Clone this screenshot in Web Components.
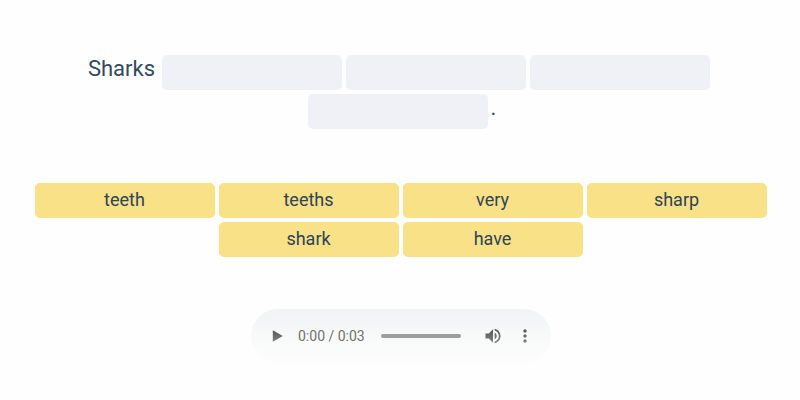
<!DOCTYPE html>
<html lang="en">
<head>
<meta charset="utf-8">
<meta name="viewport" content="width=device-width, initial-scale=1">
<title>Word order exercise</title>
<style>
  body { margin: 0; background: #fefefe; font-family: Roboto, "Liberation Sans", sans-serif; color: #34495e; }
</style>
</head>
<body>
<word-exercise>
  <sentence-line slot="sentence">
    <sentence-text>Sharks</sentence-text>
    <drop-slot></drop-slot>
    <drop-slot></drop-slot>
    <drop-slot></drop-slot>
    <drop-slot></drop-slot>
    <sentence-text tight>.</sentence-text>
  </sentence-line>
  <word-bank slot="bank">
    <word-tile>teeth</word-tile>
    <word-tile>teeths</word-tile>
    <word-tile>very</word-tile>
    <word-tile>sharp</word-tile>
    <word-tile>shark</word-tile>
    <word-tile>have</word-tile>
  </word-bank>
  <audio-bar slot="audio" current="0:00" total="0:03"></audio-bar>
</word-exercise>
<script>
  const define = (name, html, setup) => {
    const template = document.createElement('template');
    template.innerHTML = html;
    customElements.define(name, class extends HTMLElement {
      constructor() {
        super();
        this.attachShadow({ mode: 'open' }).append(template.content.cloneNode(true));
      }
      connectedCallback() { if (setup) setup(this, this.shadowRoot); }
    });
  };

  define('word-exercise', `
    <style>
      :host { display: block; padding: 55px 30px 36px 32px; }
      main { display: flex; flex-direction: column; }
      .bank { margin-top: 54px; }
      .audio { margin-top: 52px; display: flex; justify-content: center; }
    </style>
    <main>
      <slot name="sentence"></slot>
      <div class="bank"><slot name="bank"></slot></div>
      <div class="audio"><slot name="audio"></slot></div>
    </main>`);

  define('sentence-line', `
    <style>
      :host { display: flex; flex-wrap: wrap; justify-content: center; align-items: flex-start; gap: 4px; padding: 0 34px 0 30px; }
    </style>
    <slot></slot>`);

  define('sentence-text', `
    <style>
      :host { display: block; font-size: 22px; line-height: 27px; padding: 0 3px 0 0; }
      :host([tight]) { padding: 0; margin: 0 -6px 0 -1px; }
    </style>
    <slot></slot>`);

  define('drop-slot', `
    <style>
      :host { display: block; width: 180px; height: 35px; border-radius: 5px; background: #f0f1f6; }
    </style>`);

  define('word-bank', `
    <style>
      :host { display: flex; flex-wrap: wrap; justify-content: center; gap: 4px; }
    </style>
    <slot></slot>`);

  define('word-tile', `
    <style>
      :host { display: block; }
      button {
        display: block; width: 180px; height: 35px; margin: 0; padding: 0 1px 1px 0; border: 0; border-radius: 5px;
        background: #f9e187; color: #2f4356; font: 18px/34px Roboto, "Liberation Sans", sans-serif; text-align: center; cursor: grab;
      }
    </style>
    <button type="button"><slot></slot></button>`);

  define('audio-bar', `
    <style>
      :host { display: block; width: 300px; max-width: 100%; }
      .bar {
        box-sizing: border-box; height: 54px; padding: 0 10px; border-radius: 27px;
        background: linear-gradient(#f1f3f4, #f8f9f9 50%, #fdfdfd);
        display: flex; align-items: center; font-size: 14px; color: #717171;
      }
      button { width: 32px; height: 32px; border: 0; padding: 0; background: none; display: grid; place-items: center; flex: none; }
      svg { width: 20px; height: 20px; fill: url(#fade); display: block; }
      .time { margin-left: 5px; white-space: nowrap; }
      input {
        appearance: none; flex: 1; min-width: 0; height: 4px; margin: 0 16px;
        border-radius: 2px; background: #9c9d9d; outline: 0;
      }
      input::-webkit-slider-thumb { appearance: none; width: 0; height: 4px; }
    </style>
    <div class="bar" role="group" aria-label="Audio player">
      <button type="button" aria-label="Play"><svg viewBox="0 0 24 24"><defs><linearGradient id="fade" gradientUnits="userSpaceOnUse" x1="0" y1="3" x2="0" y2="21"><stop stop-color="#505050"/><stop offset="1" stop-color="#868686"/></linearGradient></defs><path d="M7 5v14l12-7z"/></svg></button>
      <span class="time"></span>
      <input type="range" min="0" max="3" value="0" aria-label="Seek">
      <button type="button" aria-label="Mute"><svg viewBox="0 0 24 24"><path d="M3 9v6h4l5 5V4L7 9H3zm13.5 3c0-1.77-1.02-3.29-2.5-4.03v8.05c1.48-.73 2.5-2.25 2.5-4.02zM14 3.23v2.06c2.89.86 5 3.54 5 6.71s-2.11 5.85-5 6.71v2.06c4.01-.91 7-4.49 7-8.77s-2.99-7.86-7-8.77z"/></svg></button>
      <button type="button" aria-label="More options"><svg viewBox="0 0 24 24"><path d="M12 8c1.1 0 2-.9 2-2s-.9-2-2-2-2 .9-2 2 .9 2 2 2zm0 2c-1.1 0-2 .9-2 2s.9 2 2 2 2-.9 2-2-.9-2-2-2zm0 6c-1.1 0-2 .9-2 2s.9 2 2 2 2-.9 2-2-.9-2-2-2z"/></svg></button>
    </div>`, (host, root) => {
      root.querySelector('.time').textContent = host.getAttribute('current') + ' / ' + host.getAttribute('total');
    });
</script>
</body>
</html>
